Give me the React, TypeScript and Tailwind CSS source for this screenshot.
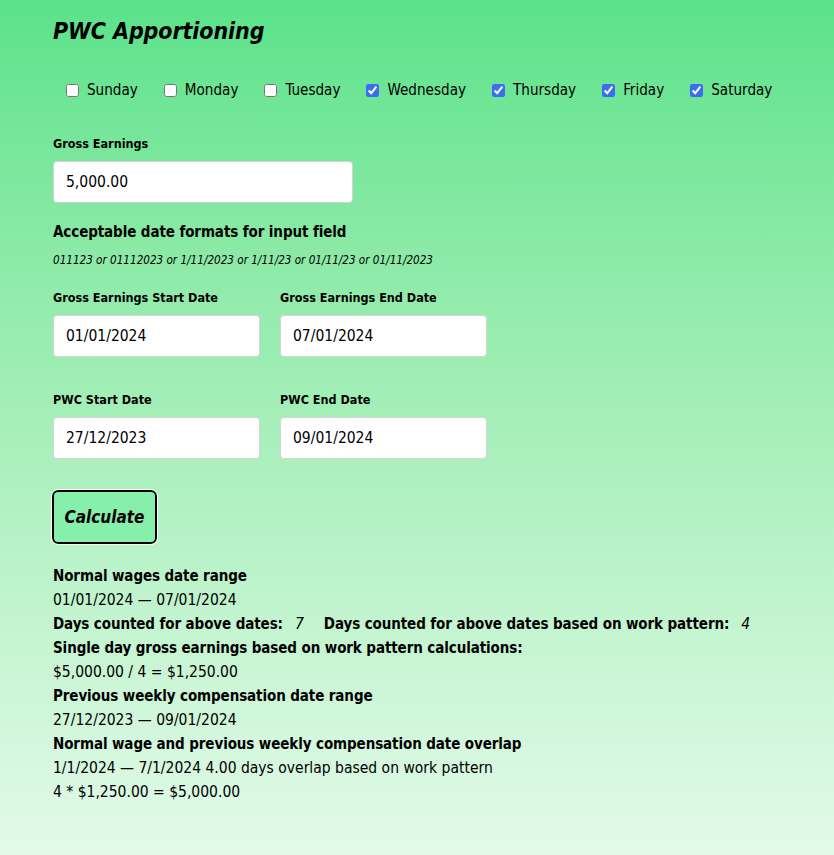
import React, { useState } from 'react'

const days = ['Sunday', 'Monday', 'Tuesday', 'Wednesday', 'Thursday', 'Friday', 'Saturday']

function Field({ label, value, width }: { label: string; value: string; width: string }) {
  return (
    <div className="flex flex-col">
      <label className="text-[12.5px] font-bold leading-[20px]">{label}</label>
      <input
        className={`${width} mt-[7px] h-[42px] rounded-[4px] border border-[#d4d4d4] bg-white px-[12px] text-[15.5px] text-black outline-none`}
        defaultValue={value}
      />
    </div>
  )
}

export default function App() {
  const [checked, setChecked] = useState<Record<string, boolean>>({
    Sunday: false,
    Monday: false,
    Tuesday: false,
    Wednesday: true,
    Thursday: true,
    Friday: true,
    Saturday: true
  })

  return (
    <div
      className="min-h-[855px] bg-gradient-to-b from-[#5ae28a] to-[#e3fae9] px-[53px] pt-[16px] pb-[40px] text-black"
      style={{ fontFamily: '"DejaVu Sans Condensed", "DejaVu Sans", sans-serif' }}
    >
      {/* Title */}
      <h1 className="text-[23px] font-bold italic leading-[30px] tracking-[-0.1px]">PWC Apportioning</h1>

      {/* Work pattern */}
      <div className="mt-[34px] flex items-center gap-[26px] pl-[13px]">
        {days.map((d) => (
          <label key={d} className="flex items-center gap-[8px] text-[15.1px] leading-[20px]">
            <input
              type="checkbox"
              className="h-[13px] w-[13px] accent-[#3b6cf6]"
              checked={checked[d]}
              onChange={() => setChecked({ ...checked, [d]: !checked[d] })}
            />
            {d}
          </label>
        ))}
      </div>

      <div className="mt-[34px]">
        <Field label="Gross Earnings" value="5,000.00" width="w-[300px]" />
      </div>

      <div className="mt-[19px] text-[15px] font-bold leading-[20px] tracking-[-0.1px]">Acceptable date formats for input field</div>
      <div className="mt-[11px] text-[11.6px] italic leading-[14px]">
        011123 or 01112023 or 1/11/2023 or 1/11/23 or 01/11/23 or 01/11/2023
      </div>

      <div className="mt-[21px] flex gap-[20px]">
        <Field label="Gross Earnings Start Date" value="01/01/2024" width="w-[207px]" />
        <Field label="Gross Earnings End Date" value="07/01/2024" width="w-[207px]" />
      </div>

      <div className="mt-[33px] flex gap-[20px]">
        <Field label="PWC Start Date" value="27/12/2023" width="w-[207px]" />
        <Field label="PWC End Date" value="09/01/2024" width="w-[207px]" />
      </div>

      <button className="mt-[31px] ml-[-1px] h-[54px] w-[105px] rounded-[6px] border-2 border-black bg-[#86efac] pt-[2px] text-[17px] font-bold italic outline outline-1 outline-white">
        Calculate
      </button>

      {/* Results */}
      <div className="mt-[20px] text-[15.5px] leading-[24px]">
        <div className="text-[15px] font-bold tracking-[-0.1px]">Normal wages date range</div>
        <div>01/01/2024 — 07/01/2024</div>
        <div className="flex">
          <span className="text-[15px] font-bold tracking-[-0.1px]">Days counted for above dates:</span>
          <span className="ml-[12px] italic">7</span>
          <span className="ml-[20px] text-[15px] font-bold tracking-[-0.1px]">Days counted for above dates based on work pattern:</span>
          <span className="ml-[12px] italic">4</span>
        </div>
        <div className="text-[15px] font-bold tracking-[-0.1px]">Single day gross earnings based on work pattern calculations:</div>
        <div>$5,000.00 / 4 = $1,250.00</div>
        <div className="text-[15px] font-bold tracking-[-0.1px]">Previous weekly compensation date range</div>
        <div>27/12/2023 — 09/01/2024</div>
        <div className="text-[15px] font-bold tracking-[-0.1px]">Normal wage and previous weekly compensation date overlap</div>
        <div>1/1/2024 — 7/1/2024 4.00 days overlap based on work pattern</div>
        <div>4 * $1,250.00 = $5,000.00</div>
      </div>
    </div>
  )
}
